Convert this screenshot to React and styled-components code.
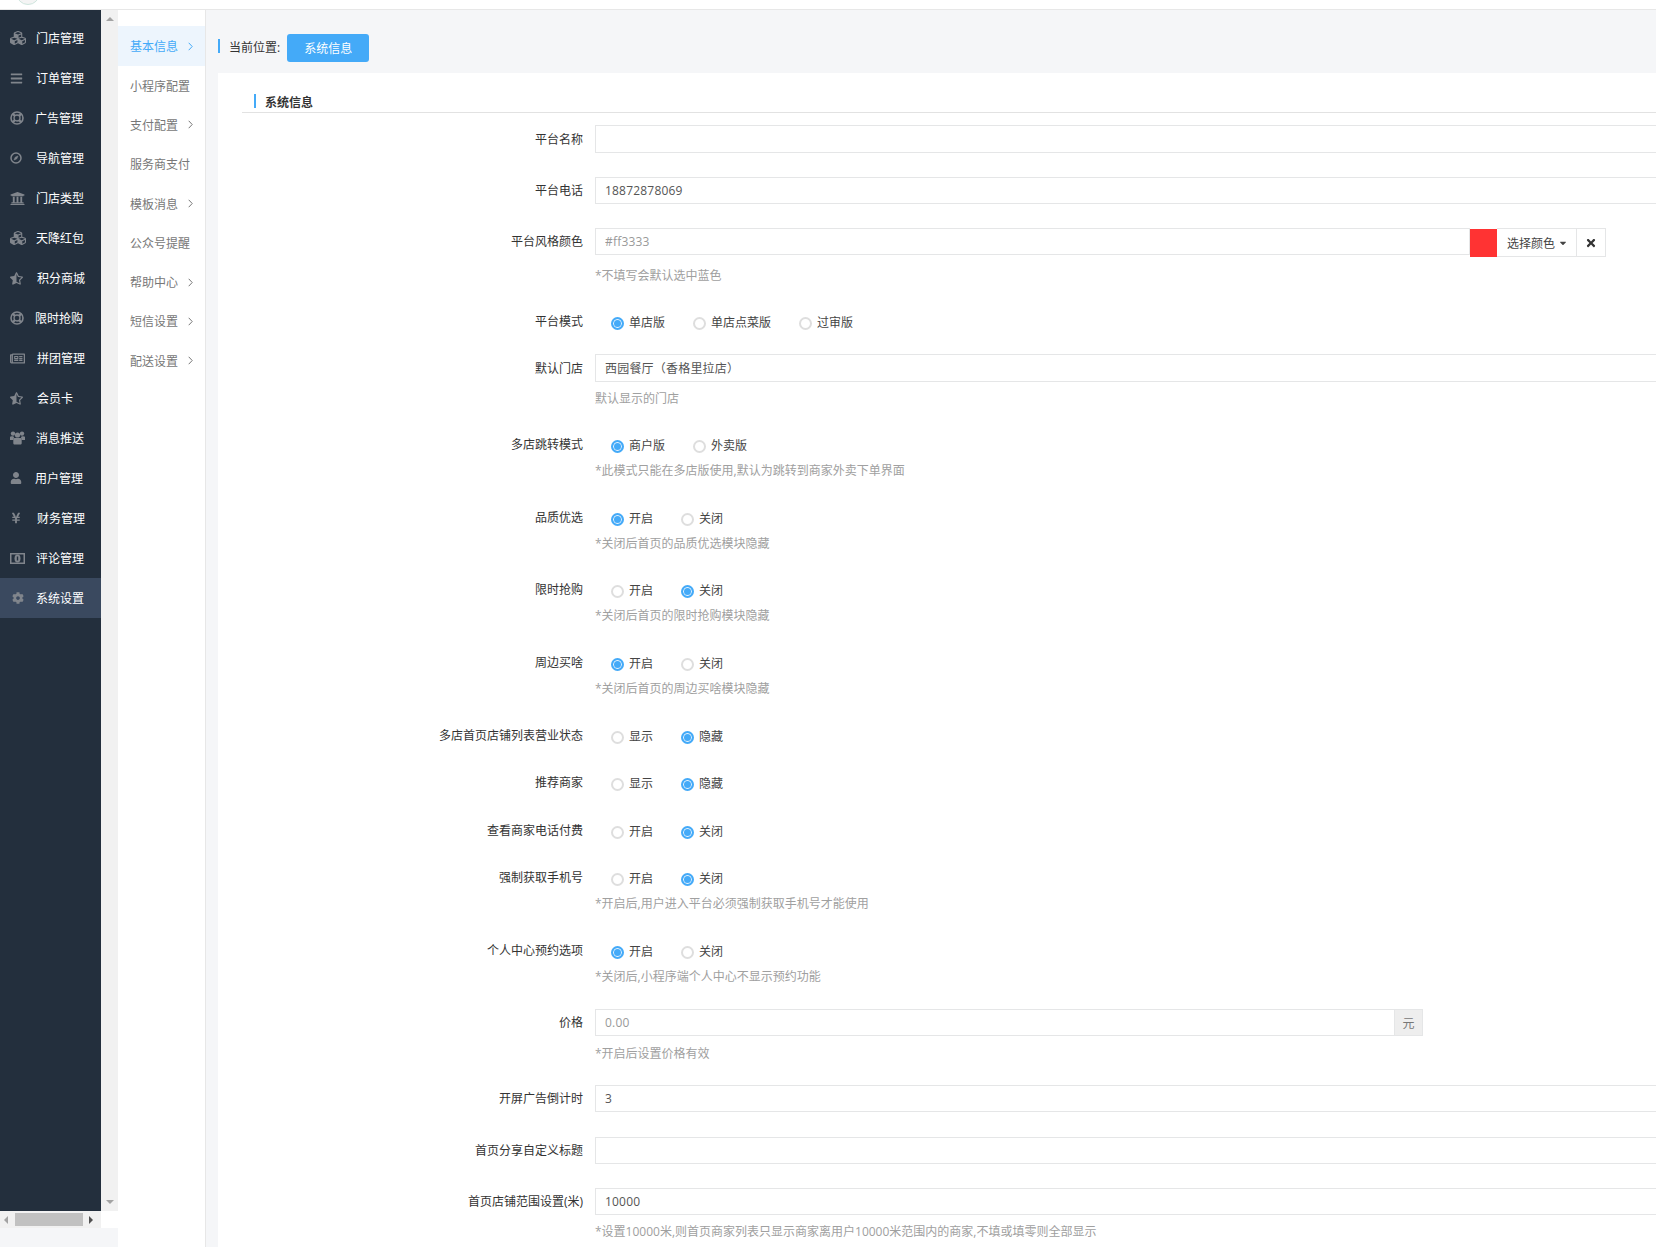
import React from 'react'
import styled, {createGlobalStyle} from 'styled-components'
import {
	FaCubes,
	FaBars,
	FaUniversity,
	FaStarHalfAlt,
	FaRegNewspaper,
	FaUser,
	FaYenSign,
	FaCog,
	FaTimes,
	FaCaretDown,
} from 'react-icons/fa'

const blue = '#44aaf8'
const line = '#e5e6e7'
const font = '"Open Sans", "Noto Sans CJK SC", sans-serif'

const GlobalStyle = createGlobalStyle`
	html, body {
		margin: 0;
		padding: 0;
		overflow: hidden;
		background: #fff;
	}
	body {
		font-family: ${font};
		font-size: 12px;
		color: #333;
	}
	* {
		box-sizing: border-box;
	}
`

const Page = styled.div`
	width: 1656px;
	height: 1247px;
	display: flex;
	flex-direction: column;
	overflow: hidden;
`

const TopBar = styled.div`
	flex: none;
	height: 10px;
	background: #fff;
	border-bottom: 1px solid #e7e7e7;
	overflow: hidden;
	padding-left: 16px;
`

const Avatar = styled.div`
	width: 24px;
	height: 24px;
	margin-top: -19px;
	border-radius: 50%;
	border: 1px solid #cfe6de;
	background: #f4f4f4;
`

const Body = styled.div`
	flex: 1;
	display: flex;
	min-height: 0;
`

const LeftColumn = styled.div`
	flex: none;
	width: 118px;
	display: flex;
	flex-direction: column;
	background: #f5f6f8;
`

const SideRow = styled.div`
	flex: none;
	height: 1201px;
	display: flex;
`

const Sidebar = styled.nav`
	width: 101px;
	padding-top: 8px;
	background: #232f3d;
`

const SideItem = styled.div`
	height: 40px;
	display: flex;
	align-items: center;
	position: relative;
	padding-left: ${({$left}) => $left}px;
	color: #fff;
	background: ${({$active}) => ($active ? '#3a495f' : 'transparent')};
`

const SideIcon = styled.span`
	position: absolute;
	left: ${({$x}) => $x || 10}px;
	top: 0;
	height: 40px;
	display: flex;
	align-items: center;
	color: #80858c;
	font-size: ${({$size}) => $size || 15}px;
`

const VScroll = styled.div`
	width: 17px;
	display: flex;
	flex-direction: column;
	justify-content: space-between;
	align-items: center;
	padding: 7px 0;
	background: #f1f1f1;
`

const Arrow = styled.span`
	width: 0;
	height: 0;
	border-style: solid;
	border-color: transparent;
	${({$dir, $color}) =>
		$dir === 'up'
			? `border-width: 0 4px 4px; border-bottom-color: ${$color};`
			: $dir === 'down'
			? `border-width: 4px 4px 0; border-top-color: ${$color};`
			: $dir === 'left'
			? `border-width: 4px 4px 4px 0; border-right-color: ${$color};`
			: `border-width: 4px 0 4px 4px; border-left-color: ${$color};`}
`

const HScroll = styled.div`
	flex: none;
	height: 17px;
	width: 118px;
	display: flex;
	background: #fff;
`

const HTrack = styled.div`
	width: 101px;
	display: flex;
	align-items: center;
	padding: 0 4px;
	background: #f1f1f1;
`

const Thumb = styled.div`
	width: 68px;
	height: 13px;
	margin: 0 6px 0 7px;
	background: #c1c1c1;
`

const SubNav = styled.nav`
	flex: none;
	width: 88px;
	padding-top: 16px;
	background: #fff;
	border-right: 1px solid #e7e7e7;
`

const SubItem = styled.div`
	height: ${({$active}) => ($active ? 40 : 39.3)}px;
	display: flex;
	align-items: center;
	justify-content: space-between;
	padding: 0 12px;
	color: ${({$active}) => ($active ? blue : '#777')};
	background: ${({$active}) => ($active ? '#edf5fd' : 'transparent')};
`

const Content = styled.div`
	flex: 1;
	min-width: 0;
	background: #f5f6f8;
	padding-left: 12px;
	display: flex;
	flex-direction: column;
`

const Crumb = styled.div`
	flex: none;
	height: 63px;
	display: flex;
	align-items: flex-start;
	padding-top: 24px;
	color: #333;
`

const CrumbMark = styled.span`
	width: 2px;
	height: 14px;
	margin: 5px 9px 0 0;
	background: ${blue};
`

const CrumbText = styled.span`
	line-height: 28px;
	margin-right: 7px;
`

const CrumbButton = styled.button`
	width: 82px;
	height: 28px;
	border: 0;
	border-radius: 3px;
	padding: 0;
	font: inherit;
	color: #fff;
	background: ${blue};
`

const Panel = styled.main`
	flex: 1;
	background: #fff;
	padding: 21px 0 0 24px;
	overflow: hidden;
`

const SectionTitle = styled.h2`
	margin: 0 0 12px;
	height: 19px;
	display: flex;
	align-items: flex-start;
	padding-left: 12px;
	font-size: 12px;
	font-weight: bold;
	line-height: 18px;
	color: #333;
	border-bottom: 1px solid #e2e2e2;
	&:before {
		content: '';
		width: 2px;
		height: 14px;
		margin-right: 9px;
		background: ${blue};
	}
`

const Row = styled.div`
	display: grid;
	grid-template-columns: 341px 1fr;
	column-gap: 12px;
	align-items: start;
	margin-bottom: ${({$after}) => $after}px;
`

const Label = styled.label`
	text-align: right;
	white-space: nowrap;
	color: #333;
	line-height: ${({$h}) => $h || 27}px;
`

const Control = styled.div`
	min-width: 0;
`

const Input = styled.input`
	display: block;
	width: 1200px;
	height: ${({$tall}) => ($tall ? 28 : 27)}px;
	padding: 0 10px 0 9px;
	border: 1px solid ${line};
	outline: none;
	font-family: ${font};
	font-size: 12px;
	letter-spacing: 0.2px;
	color: ${({$muted}) => ($muted ? '#999' : '#555')};
	background: #fff;
`

const Group = styled.div`
	display: flex;
	align-items: flex-start;
	width: ${({$width}) => $width}px;
`

const GroupInput = styled(Input)`
	flex: 1;
	width: auto;
	min-width: 0;
`

const Swatch = styled.div`
	flex: none;
	width: 27px;
	height: 28px;
	margin-top: 1px;
	background: ${({$color}) => $color};
`

const PickerButton = styled.div`
	flex: none;
	width: 80px;
	height: 29px;
	display: flex;
	align-items: center;
	justify-content: center;
	gap: 3px;
	padding-left: 2px;
	color: #444;
	border: 1px solid ${line};
	border-left: 0;
`

const ClearButton = styled.div`
	flex: none;
	width: 29px;
	height: 29px;
	display: flex;
	align-items: center;
	justify-content: center;
	font-size: 12px;
	color: #333;
	border: 1px solid ${line};
	border-left: 0;
`

const Addon = styled.div`
	flex: none;
	width: 28px;
	height: 27px;
	line-height: 27px;
	text-align: center;
	color: #777;
	background: #eee;
	border: 1px solid ${line};
	border-left: 0;
`

const Tip = styled.div`
	margin-top: ${({$top}) => $top}px;
	line-height: 18px;
	white-space: nowrap;
	color: #a0a0a0;
`

const Radios = styled.div`
	height: 20px;
	display: flex;
	align-items: center;
	padding-left: 16px;
	gap: 28px;
`

const Option = styled.span`
	display: flex;
	align-items: center;
	gap: 5px;
	color: #444;
`

const Dot = styled.span`
	width: 13px;
	height: 13px;
	border-radius: 50%;
	margin-top: 2px;
	border: ${({$on}) => ($on ? `2px solid ${blue}` : '2px solid #dedede')};
	background: ${({$on}) => ($on ? blue : '#fff')};
	box-shadow: ${({$on}) => ($on ? 'inset 0 0 0 1px #e8f4fe' : 'none')};
`

const Chevron = () => (
	<svg width="5" height="9" viewBox="0 0 5 9">
		<path d="M0.7 0.8 L4.2 4.5 L0.7 8.2" fill="none" stroke="currentColor" strokeWidth="1" />
	</svg>
)

const RingIcon = () => (
	<svg width="14" height="14" viewBox="0 0 14 14" fill="none" stroke="currentColor">
		<circle cx="7" cy="7" r="6" strokeWidth="1.6" />
		<circle cx="7" cy="7" r="3" strokeWidth="1.3" />
		<path d="M3 3l2 2M11 3L9 5M3 11l2-2M11 11L9 9" strokeWidth="2.4" />
	</svg>
)

const DiscIcon = () => (
	<svg width="12" height="12" viewBox="0 0 12 12" fill="none" stroke="currentColor">
		<circle cx="6" cy="6" r="5" strokeWidth="1.5" />
		<path d="M8 4L6.8 6.8 4 8 5.2 5.2z" fill="currentColor" strokeWidth="0.6" />
	</svg>
)

const GroupIcon = () => (
	<svg width="15" height="14" viewBox="0 0 15 14" fill="currentColor">
		<circle cx="3" cy="2.6" r="2.2" />
		<circle cx="12" cy="2.6" r="2.2" />
		<circle cx="7.5" cy="4" r="2.6" />
		<path d="M0 5.8C.6 5.2 1.4 5 3 5.2l1 .8-.6 3H0zM15 5.8c-.6-.6-1.400-.8-3-.6l-1 .8.6 3h3.400z" />
		<path d="M4.500 7h6c.8 0 1.200.8 1.200 2.200V12c0 1-.6 1.500-1.500 1.500H4.800c-.9 0-1.500-.5-1.500-1.500V9.200C3.300 7.800 3.700 7 4.500 7z" />
	</svg>
)

const NoteIcon = () => (
	<svg width="15" height="11" viewBox="0 0 15 11">
		<rect width="15" height="11" fill="currentColor" />
		<rect x="1.500" y="1.500" width="12" height="8" fill="#232f3d" />
		<ellipse cx="7.500" cy="5.500" rx="3" ry="4" fill="currentColor" />
		<rect x="6.800" y="3.500" width="1.400" height="4" fill="#232f3d" />
	</svg>
)

const sideItems = [
	{name: '门店管理', Icon: FaCubes, left: 36, size: 16},
	{name: '订单管理', Icon: FaBars, left: 36, size: 13},
	{name: '广告管理', Icon: RingIcon, left: 35},
	{name: '导航管理', Icon: DiscIcon, left: 36},
	{name: '门店类型', Icon: FaUniversity, left: 36, size: 15},
	{name: '天降红包', Icon: FaCubes, left: 36, size: 16},
	{name: '积分商城', Icon: FaStarHalfAlt, left: 37, size: 13},
	{name: '限时抢购', Icon: RingIcon, left: 35},
	{name: '拼团管理', Icon: FaRegNewspaper, left: 37, size: 15},
	{name: '会员卡', Icon: FaStarHalfAlt, left: 37, size: 13},
	{name: '消息推送', Icon: GroupIcon, left: 36},
	{name: '用户管理', Icon: FaUser, left: 35, size: 12},
	{name: '财务管理', Icon: FaYenSign, left: 37, size: 12},
	{name: '评论管理', Icon: NoteIcon, left: 36},
	{name: '系统设置', Icon: FaCog, left: 36, size: 12, x: 12, active: true},
]

const subItems = [
	{name: '基本信息', more: true, active: true},
	{name: '小程序配置'},
	{name: '支付配置', more: true},
	{name: '服务商支付'},
	{name: '模板消息', more: true},
	{name: '公众号提醒'},
	{name: '帮助中心', more: true},
	{name: '短信设置', more: true},
	{name: '配送设置', more: true},
]

const onOff = ['开启', '关闭']
const showHide = ['显示', '隐藏']

const RadioRow = ({label, options, on, tip, after}) => (
	<Row $after={after}>
		<Label $h={20}>{label}</Label>
		<Control>
			<Radios>
				{options.map((option, i) => (
					<Option key={option}>
						<Dot $on={i === on} />
						{option}
					</Option>
				))}
			</Radios>
			{tip && <Tip $top={7}>{tip}</Tip>}
		</Control>
	</Row>
)

export default function App() {
	return (
		<Page>
			<GlobalStyle />
			<TopBar>
				<Avatar />
			</TopBar>
			<Body>
				<LeftColumn>
					<SideRow>
						<Sidebar>
							{sideItems.map(({name, Icon, left, size, x, active}) => (
								<SideItem key={name} $left={left} $active={active}>
									<SideIcon $size={size} $x={x}>
										<Icon />
									</SideIcon>
									{name}
								</SideItem>
							))}
						</Sidebar>
						<VScroll>
							<Arrow $dir="up" $color="#a3a3a3" />
							<Arrow $dir="down" $color="#a3a3a3" />
						</VScroll>
					</SideRow>
					<HScroll>
						<HTrack>
							<Arrow $dir="left" $color="#a3a3a3" />
							<Thumb />
							<Arrow $dir="right" $color="#505050" />
						</HTrack>
					</HScroll>
				</LeftColumn>
				<SubNav>
					{subItems.map(({name, more, active}) => (
						<SubItem key={name} $active={active}>
							{name}
							{more && <Chevron />}
						</SubItem>
					))}
				</SubNav>
				<Content>
					<Crumb>
						<CrumbMark />
						<CrumbText>当前位置:</CrumbText>
						<CrumbButton>系统信息</CrumbButton>
					</Crumb>
					<Panel>
						<SectionTitle>系统信息</SectionTitle>
						<Row $after={23}>
							<Label $h={29}>平台名称</Label>
							<Control>
								<Input $tall />
							</Control>
						</Row>
						<Row $after={24}>
							<Label>平台电话</Label>
							<Control>
								<Input defaultValue="18872878069" />
							</Control>
						</Row>
						<Row $after={27}>
							<Label>平台风格颜色</Label>
							<Control>
								<Group $width={1011}>
									<GroupInput $muted defaultValue="#ff3333" />
									<Swatch $color="#ff3333" />
									<PickerButton>
										选择颜色
										<FaCaretDown size={10} />
									</PickerButton>
									<ClearButton>
										<FaTimes />
									</ClearButton>
								</Group>
								<Tip $top={10}>*不填写会默认选中蓝色</Tip>
							</Control>
						</Row>
						<RadioRow label="平台模式" options={['单店版', '单店点菜版', '过审版']} on={0} after={22} />
						<Row $after={27}>
							<Label $h={29}>默认门店</Label>
							<Control>
								<Input $tall defaultValue="西园餐厅（香格里拉店）" />
								<Tip $top={8}>默认显示的门店</Tip>
							</Control>
						</Row>
						<RadioRow
							label="多店跳转模式"
							options={['商户版', '外卖版']}
							on={0}
							tip="*此模式只能在多店版使用,默认为跳转到商家外卖下单界面"
							after={28}
						/>
						<RadioRow label="品质优选" options={onOff} on={0} tip="*关闭后首页的品质优选模块隐藏" after={27} />
						<RadioRow label="限时抢购" options={onOff} on={1} tip="*关闭后首页的限时抢购模块隐藏" after={28} />
						<RadioRow label="周边买啥" options={onOff} on={0} tip="*关闭后首页的周边买啥模块隐藏" after={28} />
						<RadioRow label="多店首页店铺列表营业状态" options={showHide} on={1} after={27} />
						<RadioRow label="推荐商家" options={showHide} on={1} after={28} />
						<RadioRow label="查看商家电话付费" options={onOff} on={1} after={27} />
						<RadioRow
							label="强制获取手机号"
							options={onOff}
							on={1}
							tip="*开启后,用户进入平台必须强制获取手机号才能使用"
							after={28}
						/>
						<RadioRow
							label="个人中心预约选项"
							options={onOff}
							on={0}
							tip="*关闭后,小程序端个人中心不显示预约功能"
							after={23}
						/>
						<Row $after={22}>
							<Label>价格</Label>
							<Control>
								<Group $width={828}>
									<GroupInput $muted defaultValue="0.00" />
									<Addon>元</Addon>
								</Group>
								<Tip $top={9}>*开启后设置价格有效</Tip>
							</Control>
						</Row>
						<Row $after={25}>
							<Label>开屏广告倒计时</Label>
							<Control>
								<Input defaultValue="3" />
							</Control>
						</Row>
						<Row $after={24}>
							<Label>首页分享自定义标题</Label>
							<Control>
								<Input />
							</Control>
						</Row>
						<Row $after={0}>
							<Label>首页店铺范围设置(米)</Label>
							<Control>
								<Input defaultValue="10000" />
								<Tip $top={8}>*设置10000米,则首页商家列表只显示商家离用户10000米范围内的商家,不填或填零则全部显示</Tip>
							</Control>
						</Row>
					</Panel>
				</Content>
			</Body>
		</Page>
	)
}
